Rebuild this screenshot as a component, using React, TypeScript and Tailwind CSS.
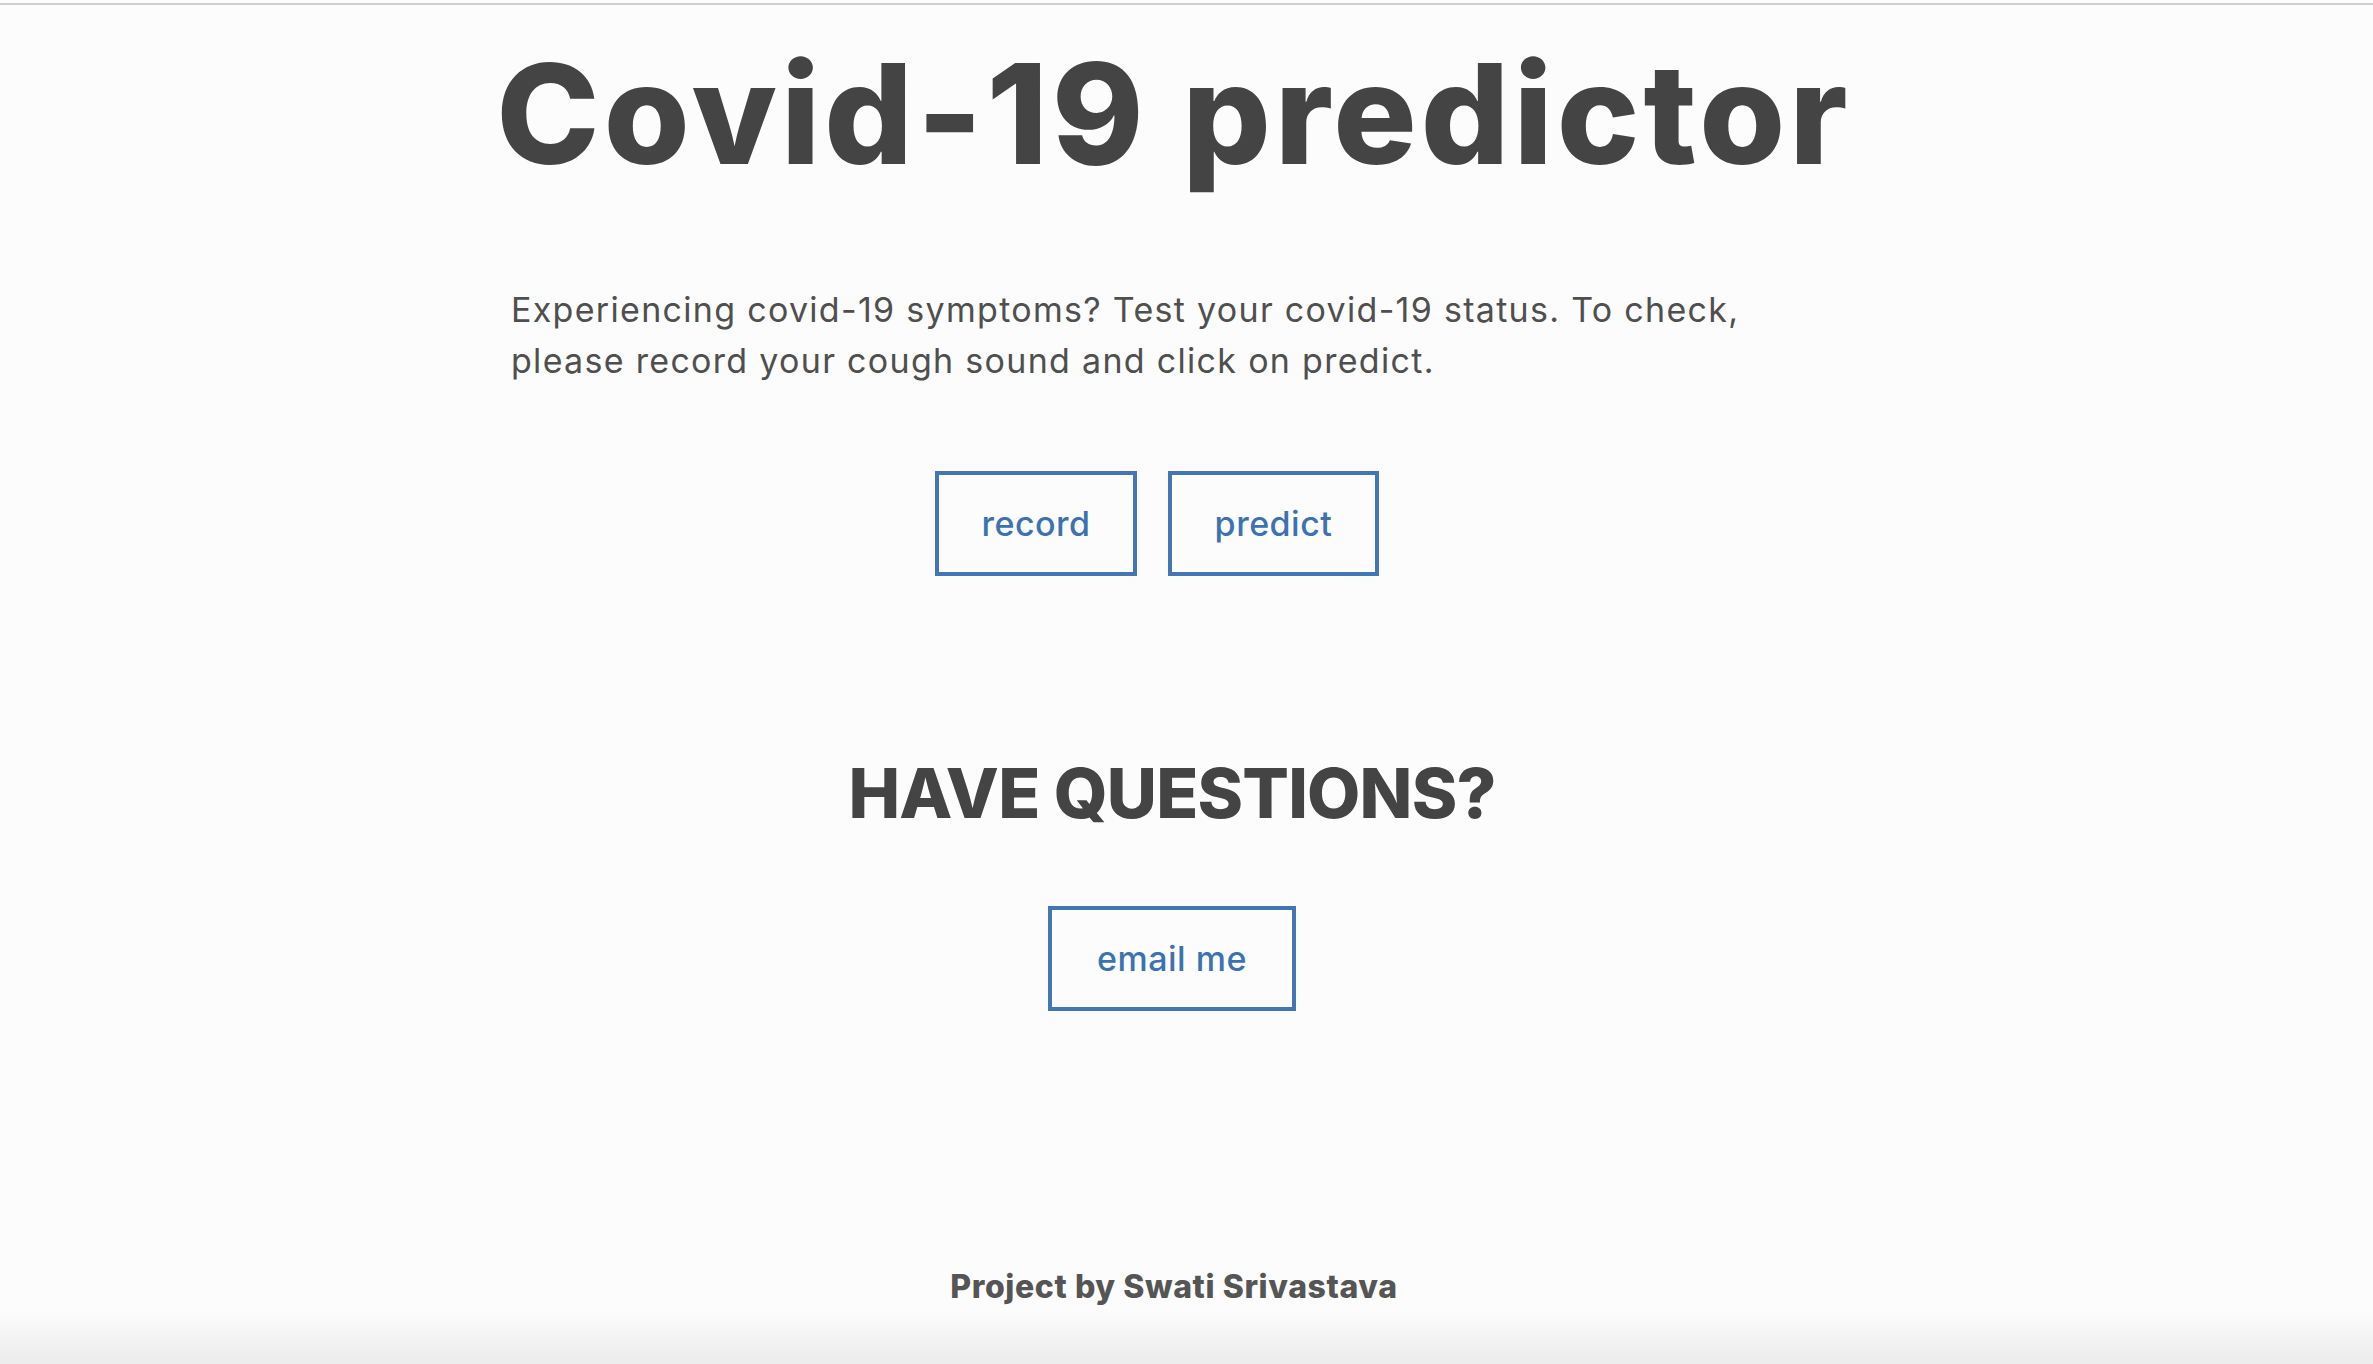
import { ReactNode } from 'react';

const font = { fontFamily: 'Inter, "Noto Sans", sans-serif' };

function OutlineButton({ children, width }: { children: ReactNode; width: string }) {
  return (
    <button
      className={`${width} h-[105px] border-[4px] border-[#4277b4] bg-transparent text-[34px] font-medium tracking-[0.5px] text-[#3d72b0] flex items-center justify-center`}
    >
      {children}
    </button>
  );
}

export default function App() {
  return (
    <div className="min-h-screen bg-[#fcfcfc] flex flex-col" style={font}>
      {/* top rule */}
      <div className="mt-[3px] h-[2px] bg-[#cfcfcf]" />

      <main className="flex flex-col items-center pr-[29px]">
        <h1 className="mt-[39px] pl-[4px] text-[139px] font-extrabold leading-none tracking-[4px] text-[#444444]">
          Covid-19 predictor
        </h1>

        <p className="mt-[101px] w-[1322px] text-[34px] leading-[51px] tracking-[1.3px] text-[#4f4f4f]">
          Experiencing covid-19 symptoms? Test your covid-19 status. To check, please record your cough
          sound and click on predict.
        </p>

        <div className="mt-[85px] mr-[30px] flex gap-[31px]">
          <OutlineButton width="w-[202px]">record</OutlineButton>
          <OutlineButton width="w-[211px]">predict</OutlineButton>
        </div>

        <h2 className="mt-[183px] text-[69px] font-extrabold leading-none tracking-[-0.8px] text-[#444444]">
          HAVE QUESTIONS?
        </h2>

        <div className="mt-[78px]">
          <OutlineButton width="w-[248px]">email me</OutlineButton>
        </div>
      </main>

      {/* footer */}
      <footer className="flex-1 flex flex-col bg-gradient-to-b from-[#fcfcfc] from-[85%] to-[#ebebeb]">
        <div className="flex justify-center pr-[29px] pl-[4px]">
          <span className="mt-[260px] text-[32px] font-extrabold leading-none tracking-[0.6px] text-[#555555]">
            Project by Swati Srivastava
          </span>
        </div>
      </footer>
    </div>
  );
}
